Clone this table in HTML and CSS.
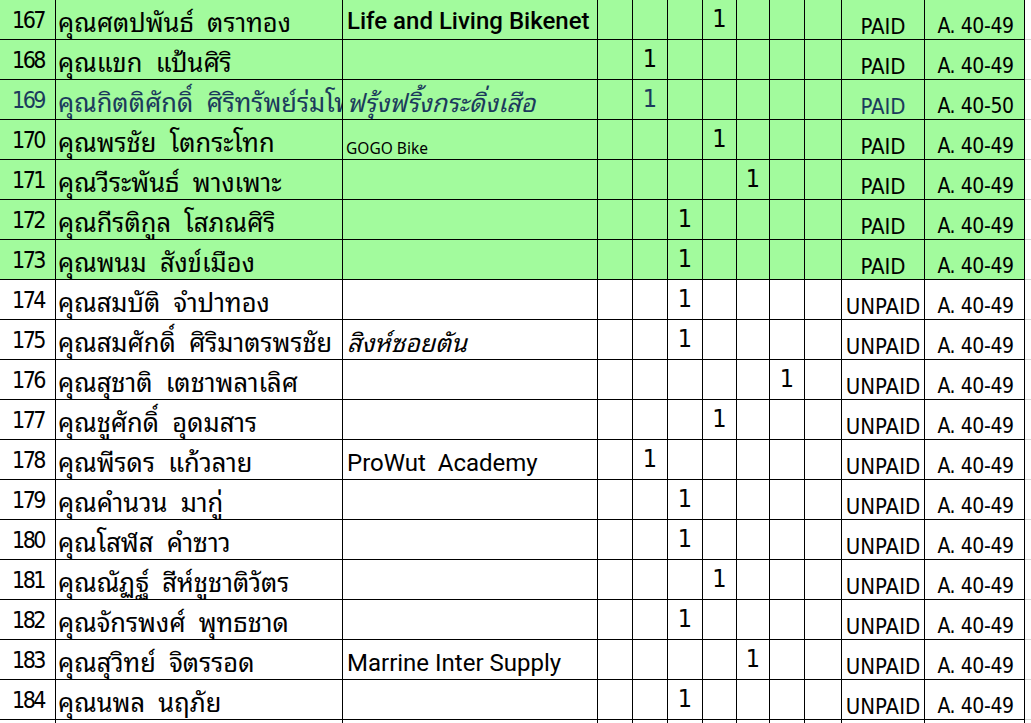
FILE: index.html
```html
<!DOCTYPE html>
<html lang="th">
<head>
<meta charset="utf-8">
<title>รายชื่อ</title>
<link rel="stylesheet" href="styles.css">
</head>
<body>
<div class="sheet">
  <div class="row green">
    <div class="c num">167</div><div class="c name">คุณศตปพันธ์  ตราทอง</div><div class="c team big">Life and Living Bikenet</div>
    <div class="c q"></div><div class="c q"></div><div class="c q"></div><div class="c q">1</div><div class="c q"></div><div class="c q"></div><div class="c q"></div>
    <div class="c st">PAID</div><div class="c grp">A. 40-49</div><div class="x"></div>
  </div>
  <div class="row green">
    <div class="c num">168</div><div class="c name">คุณแขก  แป้นศิริ</div><div class="c team"></div>
    <div class="c q"></div><div class="c q">1</div><div class="c q"></div><div class="c q"></div><div class="c q"></div><div class="c q"></div><div class="c q"></div>
    <div class="c st">PAID</div><div class="c grp">A. 40-49</div><div class="x"></div>
  </div>
  <div class="row green navy">
    <div class="c num">169</div><div class="c name">คุณกิตติศักดิ์  ศิริทรัพย์ร่มโพธิ์</div><div class="c team th it">ฟรุ้งฟริ้งกระดิ่งเสือ</div>
    <div class="c q"></div><div class="c q">1</div><div class="c q"></div><div class="c q"></div><div class="c q"></div><div class="c q"></div><div class="c q"></div>
    <div class="c st">PAID</div><div class="c grp black">A. 40-50</div><div class="x"></div>
  </div>
  <div class="row green">
    <div class="c num">170</div><div class="c name">คุณพรชัย  โตกระโทก</div><div class="c team small">GOGO Bike</div>
    <div class="c q"></div><div class="c q"></div><div class="c q"></div><div class="c q">1</div><div class="c q"></div><div class="c q"></div><div class="c q"></div>
    <div class="c st">PAID</div><div class="c grp">A. 40-49</div><div class="x"></div>
  </div>
  <div class="row green">
    <div class="c num">171</div><div class="c name">คุณวีระพันธ์  พางเพาะ</div><div class="c team"></div>
    <div class="c q"></div><div class="c q"></div><div class="c q"></div><div class="c q"></div><div class="c q">1</div><div class="c q"></div><div class="c q"></div>
    <div class="c st">PAID</div><div class="c grp">A. 40-49</div><div class="x"></div>
  </div>
  <div class="row green">
    <div class="c num">172</div><div class="c name">คุณกีรติกูล  โสภณศิริ</div><div class="c team"></div>
    <div class="c q"></div><div class="c q"></div><div class="c q">1</div><div class="c q"></div><div class="c q"></div><div class="c q"></div><div class="c q"></div>
    <div class="c st">PAID</div><div class="c grp">A. 40-49</div><div class="x"></div>
  </div>
  <div class="row green">
    <div class="c num">173</div><div class="c name">คุณพนม  สังข์เมือง</div><div class="c team"></div>
    <div class="c q"></div><div class="c q"></div><div class="c q">1</div><div class="c q"></div><div class="c q"></div><div class="c q"></div><div class="c q"></div>
    <div class="c st">PAID</div><div class="c grp">A. 40-49</div><div class="x"></div>
  </div>
  <div class="row">
    <div class="c num">174</div><div class="c name">คุณสมบัติ  จำปาทอง</div><div class="c team"></div>
    <div class="c q"></div><div class="c q"></div><div class="c q">1</div><div class="c q"></div><div class="c q"></div><div class="c q"></div><div class="c q"></div>
    <div class="c st">UNPAID</div><div class="c grp">A. 40-49</div><div class="x"></div>
  </div>
  <div class="row">
    <div class="c num">175</div><div class="c name">คุณสมศักดิ์  ศิริมาตรพรชัย</div><div class="c team th it">สิงห์ซอยตัน</div>
    <div class="c q"></div><div class="c q"></div><div class="c q">1</div><div class="c q"></div><div class="c q"></div><div class="c q"></div><div class="c q"></div>
    <div class="c st">UNPAID</div><div class="c grp">A. 40-49</div><div class="x"></div>
  </div>
  <div class="row">
    <div class="c num">176</div><div class="c name">คุณสุชาติ  เตชาพลาเลิศ</div><div class="c team"></div>
    <div class="c q"></div><div class="c q"></div><div class="c q"></div><div class="c q"></div><div class="c q"></div><div class="c q">1</div><div class="c q"></div>
    <div class="c st">UNPAID</div><div class="c grp">A. 40-49</div><div class="x"></div>
  </div>
  <div class="row">
    <div class="c num">177</div><div class="c name">คุณชูศักดิ์  อุดมสาร</div><div class="c team"></div>
    <div class="c q"></div><div class="c q"></div><div class="c q"></div><div class="c q">1</div><div class="c q"></div><div class="c q"></div><div class="c q"></div>
    <div class="c st">UNPAID</div><div class="c grp">A. 40-49</div><div class="x"></div>
  </div>
  <div class="row">
    <div class="c num">178</div><div class="c name">คุณพีรดร  แก้วลาย</div><div class="c team lat">ProWut  Academy</div>
    <div class="c q"></div><div class="c q">1</div><div class="c q"></div><div class="c q"></div><div class="c q"></div><div class="c q"></div><div class="c q"></div>
    <div class="c st">UNPAID</div><div class="c grp">A. 40-49</div><div class="x"></div>
  </div>
  <div class="row">
    <div class="c num">179</div><div class="c name">คุณคำนวน  มากู่</div><div class="c team"></div>
    <div class="c q"></div><div class="c q"></div><div class="c q">1</div><div class="c q"></div><div class="c q"></div><div class="c q"></div><div class="c q"></div>
    <div class="c st">UNPAID</div><div class="c grp">A. 40-49</div><div class="x"></div>
  </div>
  <div class="row">
    <div class="c num">180</div><div class="c name">คุณโสฬส  คำซาว</div><div class="c team"></div>
    <div class="c q"></div><div class="c q"></div><div class="c q">1</div><div class="c q"></div><div class="c q"></div><div class="c q"></div><div class="c q"></div>
    <div class="c st">UNPAID</div><div class="c grp">A. 40-49</div><div class="x"></div>
  </div>
  <div class="row">
    <div class="c num">181</div><div class="c name">คุณณัฏฐ์  สีห์ชูชาติวัตร</div><div class="c team"></div>
    <div class="c q"></div><div class="c q"></div><div class="c q"></div><div class="c q">1</div><div class="c q"></div><div class="c q"></div><div class="c q"></div>
    <div class="c st">UNPAID</div><div class="c grp">A. 40-49</div><div class="x"></div>
  </div>
  <div class="row">
    <div class="c num">182</div><div class="c name">คุณจักรพงศ์  พุทธชาด</div><div class="c team"></div>
    <div class="c q"></div><div class="c q"></div><div class="c q">1</div><div class="c q"></div><div class="c q"></div><div class="c q"></div><div class="c q"></div>
    <div class="c st">UNPAID</div><div class="c grp">A. 40-49</div><div class="x"></div>
  </div>
  <div class="row">
    <div class="c num">183</div><div class="c name">คุณสุวิทย์  จิตรรอด</div><div class="c team lat">Marrine Inter Supply</div>
    <div class="c q"></div><div class="c q"></div><div class="c q"></div><div class="c q"></div><div class="c q">1</div><div class="c q"></div><div class="c q"></div>
    <div class="c st">UNPAID</div><div class="c grp">A. 40-49</div><div class="x"></div>
  </div>
  <div class="row">
    <div class="c num">184</div><div class="c name">คุณนพล  นฤภัย</div><div class="c team"></div>
    <div class="c q"></div><div class="c q"></div><div class="c q">1</div><div class="c q"></div><div class="c q"></div><div class="c q"></div><div class="c q"></div>
    <div class="c st">UNPAID</div><div class="c grp">A. 40-49</div><div class="x"></div>
  </div>
  <div class="row">
    <div class="c num"></div><div class="c name"></div><div class="c team"></div>
    <div class="c q"></div><div class="c q"></div><div class="c q"></div><div class="c q"></div><div class="c q"></div><div class="c q"></div><div class="c q"></div>
    <div class="c st"></div><div class="c grp"></div><div class="x"></div>
  </div>
</div>
</body>
</html>
```

FILE: styles.css
```css
html, body {
  margin: 0;
  padding: 0;
  background: #ffffff;
  overflow: hidden;
}

.sheet {
  display: flex;
  flex-direction: column;
  font-family: "Liberation Sans Narrow", "DejaVu Sans Condensed", "Noto Sans Thai Looped", "Noto Sans Thai", "Loma", "Garuda", sans-serif;
  color: #000;
}

.row {
  display: grid;
  grid-template-columns: 56px 287px 255px 35px 35px 35px 34px 33px 35px 37px 83px 100px 1fr;
  height: 40px;
}

.c {
  box-sizing: border-box;
  border-right: 1px solid #000;
  border-bottom: 1px solid #000;
  overflow: hidden;
  white-space: pre;
  display: flex;
  align-items: flex-end;
}

.x {
  box-sizing: border-box;
  border-bottom: 1px solid #d4d4d4;
}

.green .c {
  background: #a2fb9d;
}

.navy .c {
  color: #1b3a5c;
}

.navy .black {
  color: #000;
}

.num {
  justify-content: center;
  align-items: center;
  font-size: 23px;
  letter-spacing: -2.5px;
  padding-left: 1px;
}

.name {
  font-family: "Noto Sans Thai Looped", "Noto Sans Thai", "Loma", "Garuda", sans-serif;
  font-size: 25.5px;
  line-height: 36px;
  padding-left: 2px;
}

.team {
  font-size: 24px;
  line-height: 36px;
  padding-left: 4px;
}

.team.big {
  font-family: Roboto, "Noto Sans", sans-serif;
  font-weight: 500;
}

.team.lat {
  font-family: Roboto, "Noto Sans", sans-serif;
  font-size: 24px;
  line-height: 32px;
}

.team.small {
  font-family: "Noto Sans", sans-serif;
  font-size: 15.5px;
  line-height: 22px;
  padding-left: 3px;
}

.team.th {
  font-family: "Noto Sans Thai Looped", "Noto Sans Thai", "Loma", "Garuda", sans-serif;
  font-size: 25px;
}

.it {
  font-style: italic;
}

.q {
  justify-content: center;
  align-items: center;
  font-size: 25px;
  padding-bottom: 3px;
}

.st, .grp {
  justify-content: center;
  font-size: 22px;
  line-height: 25px;
}

.grp {
  font-size: 21px;
  letter-spacing: -0.4px;
  padding-left: 2px;
}
```
